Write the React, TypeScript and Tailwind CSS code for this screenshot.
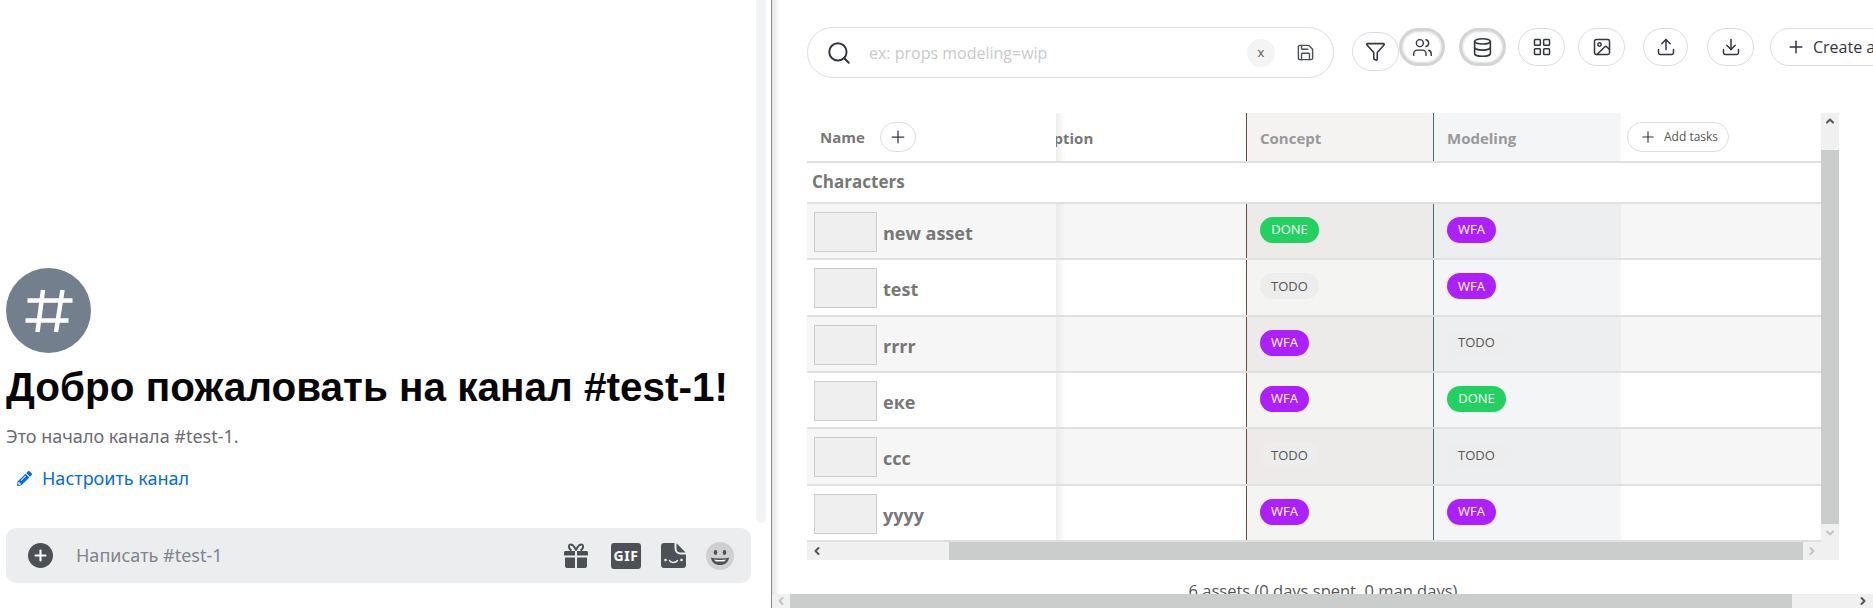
import { Search, Save, Funnel, Users, Database, LayoutGrid, Image, Upload, Download, Plus, ChevronUp, ChevronDown, ChevronLeft, ChevronRight } from "lucide-react";
import { FaPencilAlt } from "react-icons/fa";

const assets = [
  { name: "new asset", concept: "DONE", modeling: "WFA" },
  { name: "test", concept: "TODO", modeling: "WFA" },
  { name: "rrrr", concept: "WFA", modeling: "TODO" },
  { name: "еке", concept: "WFA", modeling: "DONE" },
  { name: "ccc", concept: "TODO", modeling: "TODO" },
  { name: "yyyy", concept: "WFA", modeling: "WFA" },
];

function Badge({ status }: { status: string }) {
  if (status === "DONE") {
    return <span className="flex h-[26px] w-[59px] items-center justify-center rounded-full bg-[#22d160] text-[13px] text-white">DONE</span>;
  }
  if (status === "WFA") {
    return <span className="flex h-[26px] w-[49px] items-center justify-center rounded-full bg-[#ad20fb] text-[13px] text-white">WFA</span>;
  }
  return <span className="flex h-[26px] w-[59px] items-center justify-center rounded-full bg-[#ededed] text-[13px] text-[#555]">TODO</span>;
}

function RoundButton({ children, ring, className }: { children: React.ReactNode; ring?: boolean; className: string }) {
  return (
    <div
      className={`flex items-center justify-center rounded-full bg-white text-[#33363f] ${className} ${
        ring ? "border-[3px] border-[#d4d4d4] shadow-[inset_0_0_3px_#bbb]" : "border border-[#dddddd]"
      }`}
    >
      {children}
    </div>
  );
}

function ChatIcons() {
  return (
    <div className="flex items-center text-[#4e5058]">
      <svg width="26" height="26" viewBox="0 0 26 26" fill="currentColor" className="mr-[22px]">
        <path d="M1 9.500C1 8.700 1.600 8 2.500 8H12v4.500H1V9.500ZM14 8h9.500c.9 0 1.500.7 1.500 1.500v3H14V8ZM2 14.500h10V25H4a2 2 0 0 1-2-2v-8.500ZM14 14.500h10V23a2 2 0 0 1-2 2h-8V14.500Z" />
        <path d="M13 7.500C11 2 8.500 1 7 1.600 5.300 2.300 5.600 6 8.500 7.500M13 7.500c2-5.500 4.500-6.500 6-5.900 1.700.7 1.400 4.400-1.500 5.900" fill="none" stroke="currentColor" strokeWidth="2" />
      </svg>
      <div className="mr-[20px] flex h-[26px] w-[30px] items-center justify-center rounded-[3px] bg-[#4e5058] font-['Noto_Sans',sans-serif] text-[14px] font-bold tracking-[0.5px] text-white">
        GIF
      </div>
      <svg width="25" height="25" viewBox="0 0 25 25" fill="currentColor" className="mr-[20px]">
        <path d="M3 0h10.500v5.500a6 6 0 0 0 6 6H25V22a3 3 0 0 1-3 3H3a3 3 0 0 1-3-3V3a3 3 0 0 1 3-3Z" />
        <path d="M15.500 .3 24.700 9.500h-5.200a4 4 0 0 1-4-4V.3Z" />
        <circle cx="4.500" cy="17" r="1.300" fill="#ebedef" />
        <circle cx="20.500" cy="17" r="1.300" fill="#ebedef" />
        <path d="M8.500 17.500c1 2.600 6 2.600 8 0" fill="none" stroke="#ebedef" strokeWidth="1.500" strokeLinecap="round" />
      </svg>
      <svg width="28" height="28" viewBox="0 0 28 28">
        <circle cx="14" cy="14" r="14" fill="#d0d0d0" />
        <ellipse cx="9.500" cy="10.500" rx="1.800" ry="2.400" fill="#4e5058" />
        <ellipse cx="18.500" cy="10.500" rx="1.800" ry="2.400" fill="#4e5058" />
        <path d="M5 15.500c3 1.200 15 1.200 18 0-.5 5-4.500 7.500-9 7.500s-8.500-2.500-9-7.500Z" fill="#4e5058" />
        <path d="M8 17.500c3 .6 9 .6 12 0-.5 1.200-1.500 1.800-2.500 1.900-2 .2-5 .2-7 0-1-.1-2-.7-2.500-1.900Z" fill="#fff" />
      </svg>
    </div>
  );
}

export default function App() {
  return (
    <div className="flex h-[608px] w-[1873px] overflow-hidden bg-white">
      {/* chat pane */}
      <div className="flex h-full w-[771px] shrink-0 font-['Noto_Sans',sans-serif]">
        <div className="flex w-[756px] shrink-0 flex-col justify-end pb-[25px] pl-[6px] pr-[5px]">
          <div className="flex h-[85px] w-[85px] items-center justify-center rounded-full bg-[#737f8d] text-white">
            <svg width="50" height="50" viewBox="0 0 50 50" fill="none" stroke="currentColor" strokeWidth="4.500">
              <path d="M19 4 13.500 46M38.500 4 32 46M3.500 14.500h45M1.500 34.500h43" />
            </svg>
          </div>
          <h1 className="mt-[9px] whitespace-nowrap font-['Liberation_Sans',sans-serif] text-[40.5px] leading-[50px] font-bold text-[#060607]">
            Добро пожаловать на канал #test-1!
          </h1>
          <p className="mt-[13px] text-[18px] leading-[22px] text-[#6a6c74]">Это начало канала #test-1.</p>
          <div className="mt-[19px] flex h-[24px] items-center pl-[11px] text-[#006ce7]">
            <FaPencilAlt size={15} />
            <span className="ml-[10px] text-[18px]">Настроить канал</span>
          </div>
          <div className="mt-[38px] flex h-[55px] items-center justify-between rounded-[10px] bg-[#ebedef] pl-[22px] pr-[17px]">
            <div className="flex items-center">
              <div className="flex h-[25px] w-[25px] items-center justify-center rounded-full bg-[#4e5058] text-white">
                <Plus size={17} strokeWidth={3} />
              </div>
              <span className="ml-[23px] text-[18px] text-[#80848e]">Написать #test-1</span>
            </div>
            <ChatIcons />
          </div>
        </div>
        <div className="h-[523px] w-[10px] shrink-0 rounded-b-[5px] bg-[#f2f3f5]" />
      </div>
      <div className="w-px shrink-0 bg-[#8a8a8a]" />

      {/* assets pane */}
      <div className="flex min-w-0 flex-1 flex-col font-['Open_Sans',sans-serif]">
        <div className="flex min-h-0 flex-1 overflow-hidden">
          <div className="w-[8px] shrink-0 bg-gradient-to-r from-[#e4e4e4] to-white" />
          <div className="min-w-0 flex-1 overflow-hidden pl-[27px] pt-[27px]">
            <div className="flex h-[51px] w-[1200px] items-start">
              <div className="flex h-[51px] w-[527px] shrink-0 items-center rounded-full border border-[#dddddd] pl-[18px] pr-[18px]">
                <Search size={26} strokeWidth={1.8} className="text-[#33363f]" />
                <span className="ml-[17px] flex-1 text-[16px] text-[#c9c9c9]">ex: props modeling=wip</span>
                <div className="flex h-[28px] w-[28px] items-center justify-center rounded-full bg-[#f4f4f4] text-[13px] text-[#555]">x</div>
                <Save size={19} strokeWidth={1.8} className="ml-[21px] text-[#4e5058]" />
              </div>
              <RoundButton className="ml-[18px] mt-[5px] h-[39px] w-[47px] shrink-0">
                <Funnel size={21} strokeWidth={1.800} />
              </RoundButton>
              <RoundButton ring className="ml-0 mt-[1px] h-[38px] w-[46px] shrink-0">
                <Users size={21} strokeWidth={1.600} />
              </RoundButton>
              <RoundButton ring className="ml-[14px] mt-[1px] h-[38px] w-[47px] shrink-0">
                <Database size={21} strokeWidth={1.800} />
              </RoundButton>
              <RoundButton className="ml-[12px] mt-[1px] h-[38px] w-[47px] shrink-0">
                <LayoutGrid size={20} strokeWidth={1.800} />
              </RoundButton>
              <RoundButton className="ml-[13px] mt-[1px] h-[38px] w-[47px] shrink-0">
                <Image size={20} strokeWidth={1.800} />
              </RoundButton>
              <RoundButton className="ml-[18px] mt-[1px] h-[38px] w-[45px] shrink-0">
                <Upload size={20} strokeWidth={1.800} />
              </RoundButton>
              <RoundButton className="ml-[19px] mt-[1px] h-[38px] w-[47px] shrink-0">
                <Download size={20} strokeWidth={1.800} />
              </RoundButton>
              <div className="ml-[16px] mt-[1px] flex h-[38px] w-[180px] shrink-0 items-center rounded-full border border-[#dddddd] pl-[15px] text-[#33363f]">
                <Plus size={20} strokeWidth={1.800} />
                <span className="ml-[7px] whitespace-nowrap text-[16px]">Create asset</span>
              </div>
            </div>

            <div className="mt-[35px] flex w-[1032px]">
              <div className="w-[1014px] shrink-0">
                {/* header */}
                <div className="flex h-[50px] border-b-2 border-[#e0e0e0]">
                  <div className="flex w-[249px] shrink-0 items-center pl-[13px]">
                    <span className="text-[15px] font-bold text-[#777]">Name</span>
                    <div className="ml-[15px] flex h-[30px] w-[36px] items-center justify-center rounded-full border border-[#dddddd] text-[#33363f]">
                      <Plus size={20} strokeWidth={1.500} />
                    </div>
                  </div>
                  <div className="flex w-[190px] shrink-0 items-center overflow-hidden bg-gradient-to-r from-[#eeeeee] to-white to-[5%] pt-[2px]">
                    <span className="ml-[-49px] text-[15px] font-bold text-[#777]">Description</span>
                  </div>
                  <div className="flex w-[187px] shrink-0 items-center border-l border-[#6b4a3e] bg-[#f4f3f2] pl-[13px] pt-[2px]">
                    <span className="text-[15px] font-bold text-[#999]">Concept</span>
                  </div>
                  <div className="flex w-[188px] shrink-0 items-center border-l border-[#3f6f7a] bg-[#f3f5f7] pl-[13px] pt-[2px]">
                    <span className="text-[15px] font-bold text-[#999]">Modeling</span>
                  </div>
                  <div className="flex flex-1 items-center pl-[6px]">
                    <div className="flex h-[30px] w-[102px] items-center rounded-full border border-[#dddddd] pl-[11px] text-[#33363f]">
                      <Plus size={18} strokeWidth={1.500} />
                      <span className="ml-[7px] text-[12px] text-[#555]">Add tasks</span>
                    </div>
                  </div>
                </div>
                {/* group title */}
                <div className="flex h-[41px] items-center border-b-2 border-[#e0e0e0] pb-[2px] pl-[5px]">
                  <span className="text-[17px] font-bold text-[#777]">Characters</span>
                </div>
                {assets.map((asset, i) => (
                  <div
                    key={asset.name}
                    className={`flex h-[56.330px] border-b-2 border-[#e0e0e0] ${i % 2 === 0 ? "bg-[#f6f6f6]" : "bg-white"}`}
                  >
                    <div className="flex w-[249px] shrink-0 items-center pl-[7px] pt-[2px]">
                      <div className="h-[40px] w-[63px] shrink-0 border border-[#cccccc] bg-[#efefef]" />
                      <span className="ml-[6px] mt-[3px] text-[18px] font-bold text-[#777]">{asset.name}</span>
                    </div>
                    <div className={`w-[190px] shrink-0 bg-gradient-to-r to-[5%] ${i % 2 === 0 ? "from-[#eaeaea] to-[#f6f6f6]" : "from-[#eeeeee] to-white"}`} />
                    <div className={`flex w-[187px] shrink-0 items-center border-l border-[#6b4a3e] pb-[2px] pl-[13px] ${i % 2 === 0 ? "bg-[#ecebea]" : "bg-[#f4f4f3]"}`}>
                      <Badge status={asset.concept} />
                    </div>
                    <div className={`flex w-[188px] shrink-0 items-center border-l border-[#3f6f7a] pb-[2px] pl-[13px] ${i % 2 === 0 ? "bg-[#eceef0]" : "bg-[#f3f5f7]"}`}>
                      <Badge status={asset.modeling} />
                    </div>
                    <div className="flex-1" />
                  </div>
                ))}
                {/* inner horizontal scrollbar */}
                <div className="flex h-[18px]">
                  <div className="flex w-[142px] items-center bg-[#f0f0f0] pl-[4px] text-[#555]">
                    <ChevronLeft size={12} strokeWidth={4} />
                  </div>
                  <div className="flex-1 bg-[#cbcdcc]" />
                  <div className="flex w-[18px] items-center justify-center bg-[#f0f0f0] text-[#c4c4c4]">
                    <ChevronRight size={12} strokeWidth={4} />
                  </div>
                </div>
              </div>
              {/* inner vertical scrollbar */}
              <div className="flex w-[18px] shrink-0 flex-col">
                <div className="flex h-[37px] justify-center bg-[#f0f0f0] pt-[2px] text-[#555]">
                  <ChevronUp size={12} strokeWidth={4} />
                </div>
                <div className="h-[374px] bg-[#cbcdcc]" />
                <div className="flex h-[36px] justify-center bg-[#f0f0f0] pt-[3px] text-[#c4c4c4]">
                  <ChevronDown size={12} strokeWidth={4} />
                </div>
              </div>
            </div>
            <p className="mt-[20px] w-[1032px] text-center text-[16.5px] leading-[22px] text-[#555]">6 assets (0 days spent, 0 man days)</p>
          </div>
        </div>
        {/* page scrollbar */}
        <div className="flex h-[14px] shrink-0">
          <div className="flex w-[18px] items-center bg-[#f0f0f0] pl-[3px] text-[#c4c4c4]">
            <ChevronLeft size={12} strokeWidth={4} />
          </div>
          <div className="w-[1002px] bg-[#cbcdcc]" />
          <div className="flex flex-1 items-center justify-end bg-[#f0f0f0] pr-[4px] text-[#555]">
            <ChevronRight size={12} strokeWidth={4} />
          </div>
        </div>
      </div>
    </div>
  );
}
